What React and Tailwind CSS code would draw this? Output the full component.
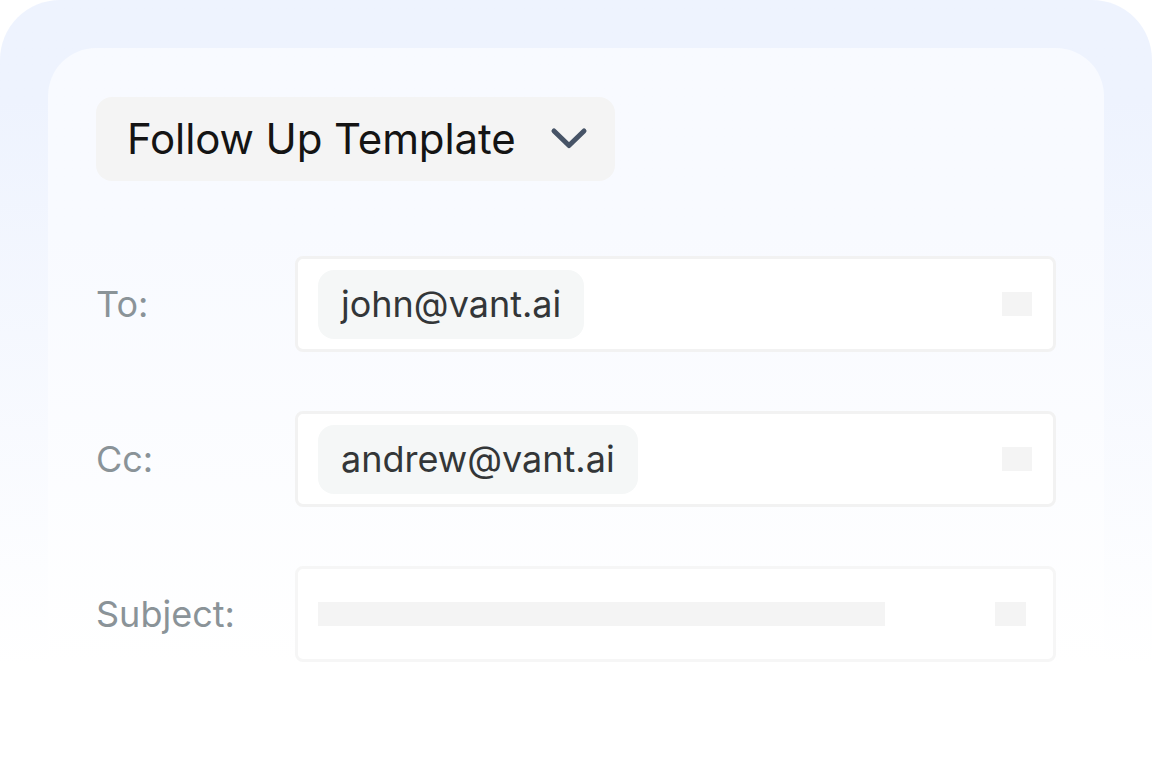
export default function App() {
  const font = { fontFamily: "Inter, 'Noto Sans', sans-serif" };
  const Row = ({ label, chip, subject }) => (
    <div className="flex items-center">
      <div className="w-[199px] shrink-0 text-[36px] text-[#8a9398] leading-none">{label}</div>
      <div className={`flex h-[96px] flex-1 items-center justify-between rounded-[8px] border-[3px] bg-white pl-[20px] pr-[21px] ${subject ? "border-[#f6f6f6]" : "border-[#f2f2f2]"}`}>
        {subject ? (
          <>
            <div className="h-[24px] w-[567px] bg-[#f4f4f4]" />
            <div className="mr-[6px] h-[24px] w-[31px] bg-[#f4f4f4]" />
          </>
        ) : (
          <>
            <div className="flex h-[69px] items-center rounded-[16px] bg-[#f5f7f7] px-[23px] text-[36px] text-[#333638] leading-none">
              {chip}
            </div>
            <div className="h-[24px] w-[30px] bg-[#f4f4f4]" />
          </>
        )}
      </div>
    </div>
  );
  return (
    <div className="relative h-[772px] w-[1152px] overflow-hidden bg-white" style={font}>
      <div className="h-[665px] rounded-t-[60px] bg-gradient-to-b from-[#eef3fe] from-[15%] to-white px-[48px] pt-[48px]">
        <div className="h-[617px] rounded-t-[48px] bg-gradient-to-b from-[#f8faff] from-[30%] to-white px-[48px] pt-[49px]">
          <div className="flex h-[84px] w-[519px] items-center justify-between rounded-[16px] bg-[#f4f4f4] pl-[31px] pr-[27px]">
            <span className="text-[42px] leading-none text-[#141414] tracking-[-0.1px]">Follow Up Template</span>
            <svg width="38" height="24" viewBox="0 0 38 24" fill="none">
              <path d="M4 4 L19 18.5 L34 4" stroke="#475467" strokeWidth="5" strokeLinecap="round" strokeLinejoin="round" />
            </svg>
          </div>
          <div className="mt-[75px] flex flex-col gap-[59px]">
            <Row label="To:" chip="john@vant.ai" />
            <Row label="Cc:" chip="andrew@vant.ai" />
            <Row label="Subject:" subject />
          </div>
        </div>
      </div>
    </div>
  );
}
